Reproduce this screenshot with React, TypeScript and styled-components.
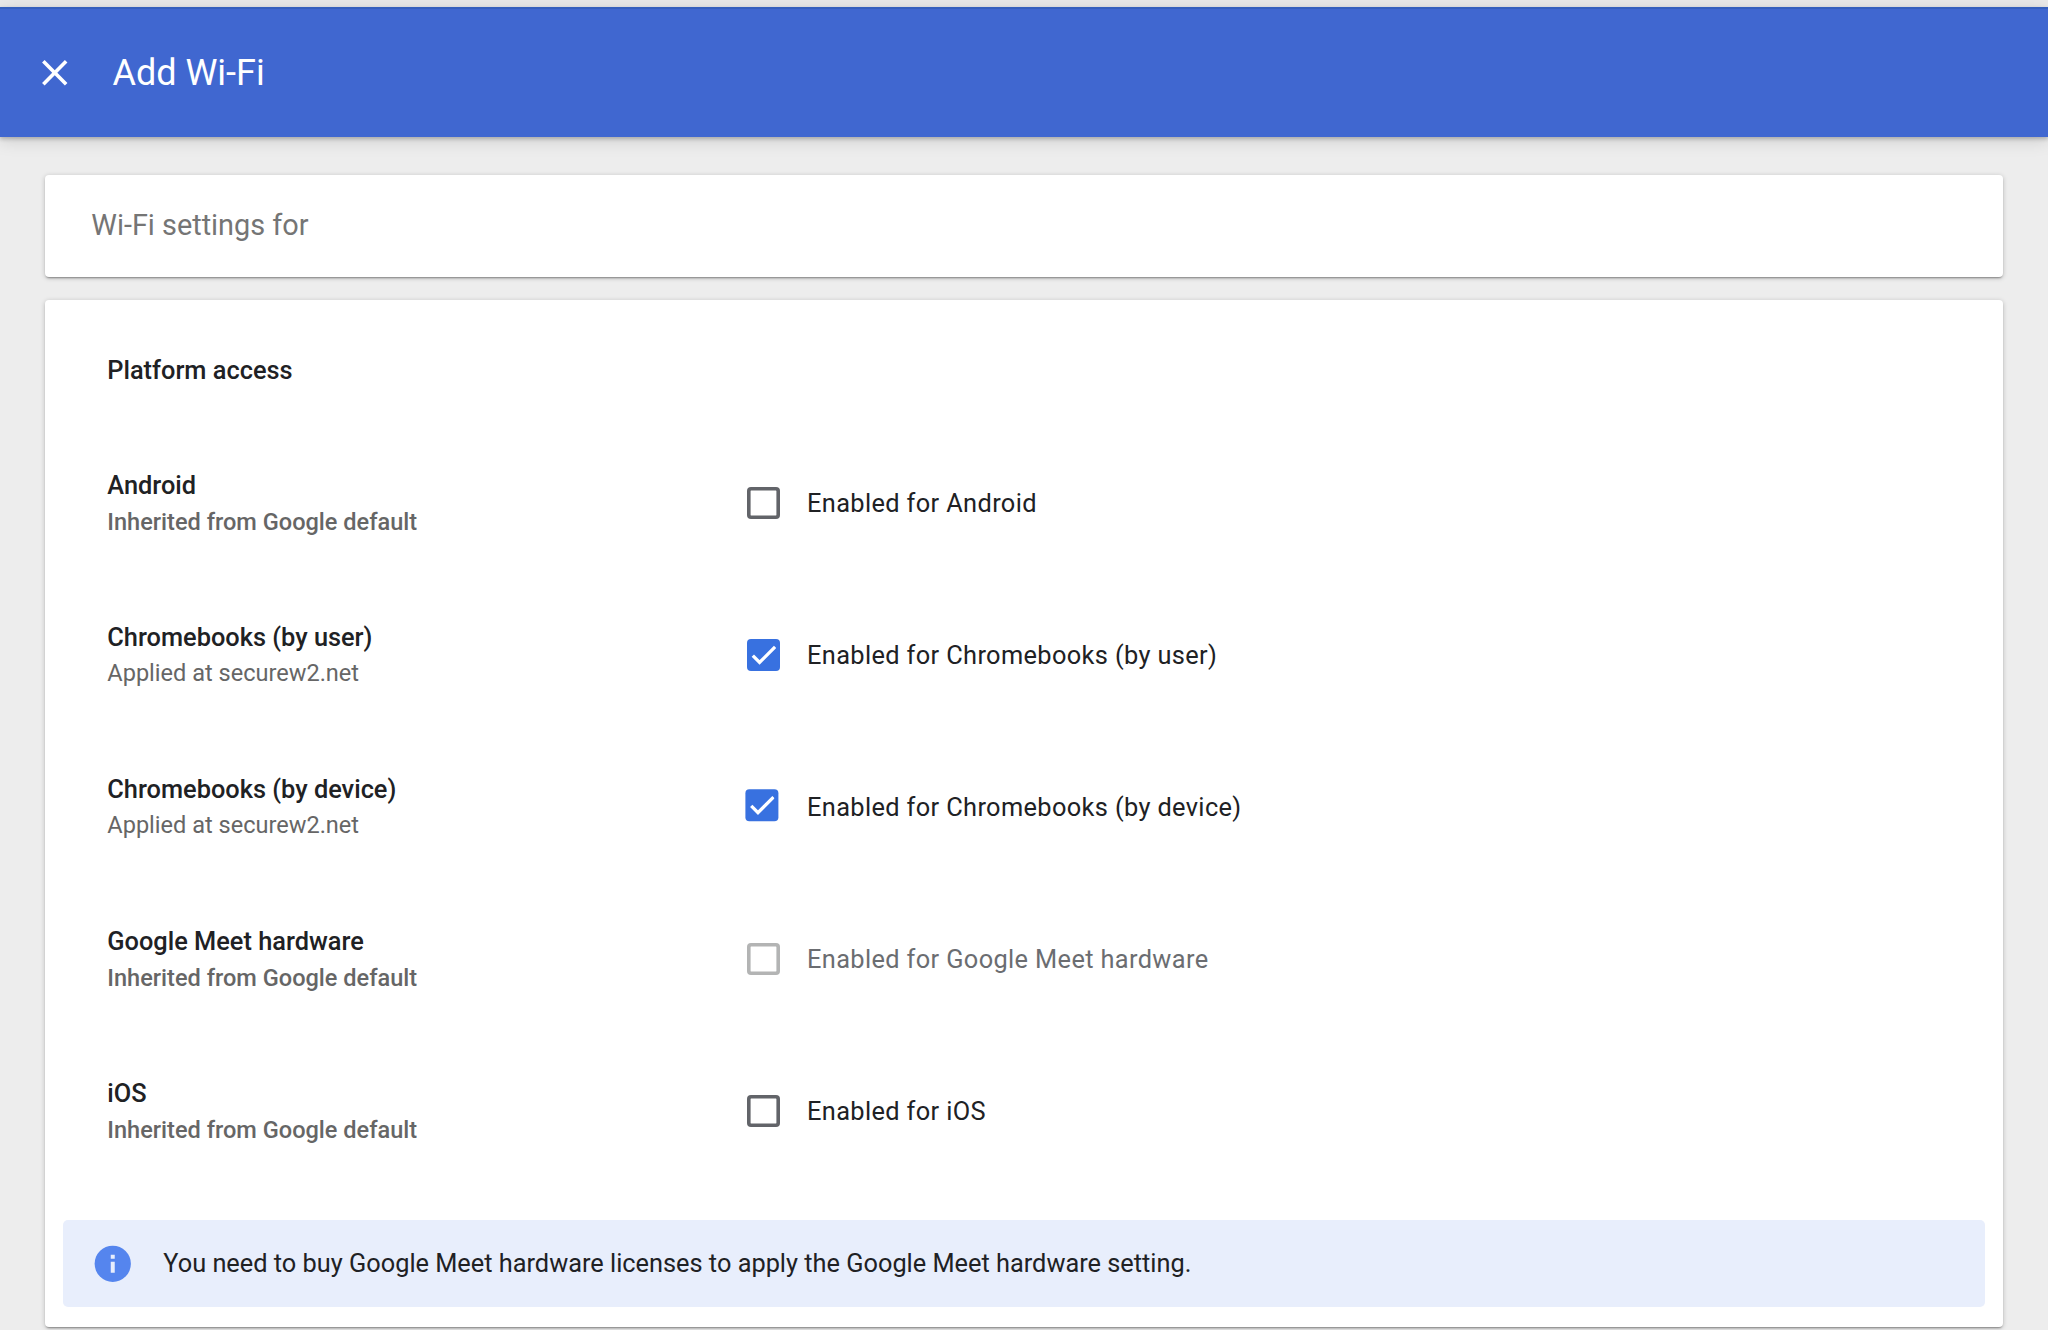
import React from 'react';
import styled, { createGlobalStyle } from 'styled-components';

const GlobalStyle = createGlobalStyle`
  * { box-sizing: border-box; }
  body {
    margin: 0;
    overflow: hidden;
    background: #ededed;
    font-family: Roboto, "Noto Sans", sans-serif;
    color: #202124;
  }
`;

const Page = styled.div`
  height: 1330px;
  overflow: hidden;
  display: flex;
  flex-direction: column;
  background: #ededed;
`;

const TopStrip = styled.div`
  flex: none;
  height: 7px;
  background: #e9e9e9;
`;

const Header = styled.header`
  flex: none;
  height: 130px;
  padding-left: 32.5px;
  display: flex;
  align-items: center;
  gap: 36.4px;
  background: #4067d0;
  border-top: 2px solid #355fbd;
  box-shadow: 0 2px 4px rgba(0, 0, 0, 0.22), 0 4px 16px rgba(0, 0, 0, 0.13);
  z-index: 1;
`;

const CloseButton = styled.button`
  margin-bottom: 1.5px;
  padding: 0;
  border: 0;
  background: none;
  color: #fff;
  display: flex;
`;

const Title = styled.h1`
  margin: 0;
  font-size: 36px;
  line-height: 48px;
  font-weight: 400;
  color: #fff;
`;

const Content = styled.main`
  padding: 38px 45px 0;
  display: flex;
  flex-direction: column;
  gap: 23px;
`;

const Card = styled.section`
  background: #fff;
  border-radius: 4px;
  box-shadow: 0 2px 2px -1px rgba(0, 0, 0, 0.36), 0 1px 5px rgba(0, 0, 0, 0.22);
`;

const SettingsCard = styled(Card)`
  height: 102px;
  padding: 0 0 2px 46.3px;
  display: flex;
  align-items: center;
  font-size: 28.87px;
  line-height: 40px;
  color: #757575;
`;

const PlatformCard = styled(Card)`
  padding: 53.5px 18px 20px;
`;

const SectionTitle = styled.h2`
  margin: 0 0 41.7px;
  padding-left: 44.3px;
  font-size: 25.37px;
  line-height: 32px;
  font-weight: 500;
`;

const Row = styled.div`
  height: 152px;
  padding-left: 44.3px;
  display: grid;
  grid-template-columns: 640.2px 1fr;
`;

const Info = styled.div`
  padding-top: 42px;
`;

const Name = styled.div`
  font-size: 25.37px;
  line-height: 32px;
  font-weight: 500;
`;

const Source = styled.div<{ $inherited: boolean }>`
  margin-top: ${p => (p.$inherited ? 7 : 5.8)}px;
  font-size: 23.55px;
  line-height: 28px;
  font-weight: ${p => (p.$inherited ? 500 : 400)};
  color: #666;
`;

const Option = styled.label`
  display: flex;
  align-items: center;
  gap: 27px;
`;

const Box = styled.span<{ $checked: boolean; $disabled: boolean; $nudged: boolean }>`
  flex: none;
  width: 32.6px;
  height: 32.6px;
  border-radius: 4px;
  box-shadow: ${p => (p.$checked ? 'none' : `inset 0 0 0 3.6px ${p.$disabled ? '#b3b4b4' : '#626469'}`)};
  background: ${p => (p.$checked ? '#3871e0' : '#fff')};
  display: flex;
  align-items: center;
  justify-content: center;
  transform: ${p => (p.$nudged ? 'translate(-1.6px, -1.8px)' : 'none')};
`;

const OptionText = styled.span<{ $disabled: boolean }>`
  font-size: 25.37px;
  line-height: 32px;
  letter-spacing: 0.36px;
  color: ${p => (p.$disabled ? '#6b6d71' : '#202124')};
`;

const Banner = styled.div`
  margin-top: 32.8px;
  height: 87px;
  padding-left: 27.6px;
  display: flex;
  align-items: center;
  gap: 29.2px;
  background: #e8eefc;
  border-radius: 5px;
`;

const BannerText = styled.p`
  margin: 1.2px 0 0;
  font-size: 25.33px;
  line-height: 32px;
`;

interface Platform {
  name: string;
  source: string;
  checked?: boolean;
  disabled?: boolean;
  nudged?: boolean;
}

const platforms: Platform[] = [
  { name: 'Android', source: 'Inherited from Google default' },
  { name: 'Chromebooks (by user)', source: 'Applied at securew2.net', checked: true },
  { name: 'Chromebooks (by device)', source: 'Applied at securew2.net', checked: true, nudged: true },
  { name: 'Google Meet hardware', source: 'Inherited from Google default', disabled: true },
  { name: 'iOS', source: 'Inherited from Google default' },
];

const CloseIcon = () => (
  <svg width="43.5" height="43.5" viewBox="0 0 24 24" fill="currentColor">
    <path d="M19 6.41L17.59 5 12 10.59 6.41 5 5 6.41 10.59 12 5 17.59 6.41 19 12 13.41 17.59 19 19 17.59 13.41 12z" />
  </svg>
);

const CheckIcon = () => (
  <svg width="25.4" height="25.4" viewBox="0 0 24 24" fill="none" stroke="#fff" strokeWidth="3.12">
    <path d="M1.73 12.91L8.1 19.28 22.79 4.59" />
  </svg>
);

const InfoIcon = () => (
  <svg width="43.5" height="43.5" viewBox="0 0 24 24" fill="#5585ee">
    <circle cx="12" cy="12" r="10" />
    <path d="M10.9 7h2.2v2.2h-2.2zM10.9 10.9h2.2V17h-2.2z" fill="#e8eefc" />
  </svg>
);

export default function App() {
  return (
    <Page>
      <GlobalStyle />
      <TopStrip />
      <Header>
        <CloseButton aria-label="Close">
          <CloseIcon />
        </CloseButton>
        <Title>Add Wi-Fi</Title>
      </Header>
      <Content>
        <SettingsCard>Wi-Fi settings for</SettingsCard>
        <PlatformCard>
          <SectionTitle>Platform access</SectionTitle>
          {platforms.map(p => (
            <Row key={p.name}>
              <Info>
                <Name>{p.name}</Name>
                <Source $inherited={p.source.startsWith('Inherited')}>{p.source}</Source>
              </Info>
              <Option>
                <Box $checked={!!p.checked} $disabled={!!p.disabled} $nudged={!!p.nudged}>
                  {p.checked && <CheckIcon />}
                </Box>
                <OptionText $disabled={!!p.disabled}>Enabled for {p.name}</OptionText>
              </Option>
            </Row>
          ))}
          <Banner>
            <InfoIcon />
            <BannerText>You need to buy Google Meet hardware licenses to apply the Google Meet hardware setting.</BannerText>
          </Banner>
        </PlatformCard>
      </Content>
    </Page>
  );
}
